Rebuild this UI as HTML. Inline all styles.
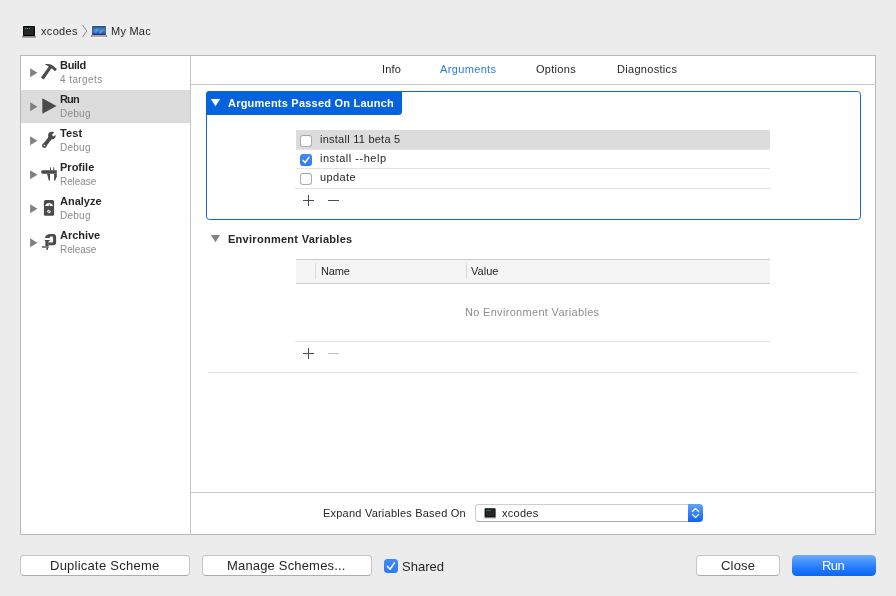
<!DOCTYPE html>
<html>
<head>
<meta charset="utf-8">
<title>Scheme Editor</title>
<style>
html,body{margin:0;padding:0;}
body{width:896px;height:596px;background:#ececec;position:relative;overflow:hidden;
 font-family:"Liberation Sans",sans-serif;font-size:11px;color:#262626;}
.abs{position:absolute;}
.t{position:absolute;white-space:nowrap;line-height:16px;will-change:transform;}
#panel{left:20px;top:55px;width:854px;height:478px;background:#fff;border:1px solid #b9b9b9;}
#sdiv{left:190px;top:56px;width:1px;height:478px;background:#c4c4c4;}
.sel{position:absolute;left:21px;top:90px;width:169px;height:33px;background:#dcdcdc;}
.tri{position:absolute;left:30px;width:0;height:0;border-left:7.3px solid #808080;border-top:4.5px solid transparent;border-bottom:4.5px solid transparent;}
.ico{position:absolute;left:40px;}
.hline{position:absolute;height:1px;background:#e2e2e2;}
.cb{position:absolute;width:10px;height:10px;border:1px solid #adadad;border-top-color:#a4a4a4;border-radius:3px;background:#fff;}
.cbon{position:absolute;width:12px;height:12px;border-radius:3px;background:linear-gradient(#4089f8,#2e7af6);}
.btn{position:absolute;height:19px;border:1px solid #c6c6c6;border-bottom-color:#adadad;border-radius:4px;background:#fff;}
</style>
</head>
<body>
<svg class="abs" style="left:21px;top:24px" width="17" height="15" viewBox="0 0 17 15">
 <rect x="1" y="1" width="14" height="12.8" rx="1" fill="#e6f7fb" opacity="0.8"/>
 <rect x="1.1" y="11.9" width="13.8" height="1.8" fill="#8a8a8a"/>
 <rect x="2" y="1.9" width="12" height="10" rx="0.6" fill="#050505"/>
 <rect x="3" y="2.9" width="10" height="8" fill="#262626"/>
 <circle cx="4.6" cy="4.5" r="0.62" fill="#35c64a"/><circle cx="6.5" cy="4.5" r="0.62" fill="#35c64a"/><circle cx="8.4" cy="4.5" r="0.62" fill="#35c64a"/>
</svg>
<div class="t" style="left:41.25px;top:23.19px;font-size:11px;letter-spacing:0.331px;">xcodes</div>
<svg class="abs" style="left:81px;top:24px" width="8" height="14" viewBox="0 0 8 14">
 <path d="M1.4 0.8 L5.8 7 L1.4 13.2" fill="none" stroke="#7d7d7d" stroke-width="0.9"/>
</svg>
<svg class="abs" style="left:90px;top:24px" width="19" height="15" viewBox="0 0 19 15">
 <defs><linearGradient id="scr" x1="0" y1="0" x2="0" y2="1"><stop offset="0" stop-color="#2a5fb4"/><stop offset="0.45" stop-color="#3f86cc"/><stop offset="0.8" stop-color="#2a5fc0"/><stop offset="1" stop-color="#1b2c9c"/></linearGradient></defs>
 <rect x="1.4" y="1.2" width="15.2" height="12.6" rx="1" fill="#fbfbfb" opacity="0.85"/>
 <rect x="2.1" y="1.9" width="13.7" height="9.3" rx="0.5" fill="#3b3b3b"/>
 <rect x="2.7" y="2.6" width="12.5" height="8.2" fill="url(#scr)"/>
 <path d="M4.3 8.6 C4.8 5.6 6.2 4.6 8.6 4.6 L6.2 9 Z M8.6 9.6 C10 6.4 11.8 5.4 13.6 5.2 L11.4 9.2 Z" fill="#6cb6da" opacity="0.6"/>
 <path d="M1 11 H17 V12.7 Q17 13 16.6 13 H1.4 Q1 13 1 12.7 Z" fill="#a9a9a3"/>
 <rect x="1" y="11.6" width="1" height="1.4" fill="#777"/><rect x="16" y="11.6" width="1" height="1.4" fill="#777"/>
</svg>
<div class="t" style="left:111.35px;top:23.19px;font-size:11px;letter-spacing:0.240px;">My Mac</div>
<div id="panel" class="abs"></div>
<div id="sdiv" class="abs"></div>
<div class="sel"></div>
<svg class="abs" style="left:30px;top:68px" width="8" height="10" viewBox="0 0 8 10"><path d="M0.1 0.3 L7.4 4.75 L0.1 9.2 Z" fill="#808080"/></svg>
<svg class="ico" style="top:63px" width="18" height="18" viewBox="0 0 18 18"><g transform="translate(0,0.5)"><path d="M5.2 0.8 C7 0.3 9.5 0.3 11 1 C12.5 1.8 13.5 2.8 14.5 3.6 L16.9 5.6 L15.4 7.5 L14.2 7.2 C13.4 6.2 12.6 5.5 11.3 5.1 L3.73 16.11 L0.87 14.09 L8.77 3.33 C8.4 2.4 7.2 1.8 5.2 1.5 Z" fill="#4b4b4b"/></g></svg>
<div class="t" style="left:60.35px;top:56.89px;font-size:11px;letter-spacing:-0.300px;font-weight:bold;">Build</div>
<div class="t" style="left:60.35px;top:71.53px;font-size:10px;letter-spacing:0.422px;color:#8b8b8b;">4 targets</div>
<svg class="abs" style="left:30px;top:102px" width="8" height="10" viewBox="0 0 8 10"><path d="M0.1 0.3 L7.4 4.75 L0.1 9.2 Z" fill="#808080"/></svg>
<svg class="ico" style="top:97px" width="18" height="18" viewBox="0 0 18 18"><g transform="translate(0,0.5)"><path d="M2.3 0.8 L16.6 8.5 L2.3 16.2 Z" fill="#4b4b4b"/></g></svg>
<div class="t" style="left:60.35px;top:90.89px;font-size:11px;letter-spacing:-0.848px;font-weight:bold;">Run</div>
<div class="t" style="left:60.35px;top:105.53px;font-size:10px;letter-spacing:0.256px;color:#8b8b8b;">Debug</div>
<svg class="abs" style="left:30px;top:136px" width="8" height="10" viewBox="0 0 8 10"><path d="M0.1 0.3 L7.4 4.75 L0.1 9.2 Z" fill="#808080"/></svg>
<svg class="ico" style="top:131px" width="18" height="18" viewBox="0 0 18 18"><g transform="translate(0,0.5)"><path d="M4.5 13.9 L11 5.4" stroke="#4b4b4b" stroke-width="3.9" stroke-linecap="round"/><circle cx="4.4" cy="14.05" r="2.35" fill="#4b4b4b"/><circle cx="11.9" cy="4" r="3.8" fill="#4b4b4b"/><path d="M13.7 3.3 L17.6 -0.6" stroke="#fff" stroke-width="2.9" stroke-linecap="round"/><circle cx="4.35" cy="14.1" r="0.75" fill="#fff"/></g></svg>
<div class="t" style="left:60.35px;top:124.89px;font-size:11px;letter-spacing:0.098px;font-weight:bold;">Test</div>
<div class="t" style="left:60.35px;top:139.53px;font-size:10px;letter-spacing:0.256px;color:#8b8b8b;">Debug</div>
<svg class="abs" style="left:30px;top:170px" width="8" height="10" viewBox="0 0 8 10"><path d="M0.1 0.3 L7.4 4.75 L0.1 9.2 Z" fill="#808080"/></svg>
<svg class="ico" style="top:165px" width="18" height="18" viewBox="0 0 18 18"><g transform="translate(0,0.5)"><path d="M2.8 4.8 H16.8 V8.3 H2.8 A1.75 1.75 0 0 1 2.8 4.8 Z" fill="#4b4b4b"/><path d="M9.9 5 L10.2 1.4 H10.7 L11.3 5 Z M13 5 L13.6 1.4 H14.1 L14.4 5 Z" fill="#4b4b4b"/><path d="M7 8.2 H10 V15 L9.3 15.3 L8.7 14.5 Z" fill="#4b4b4b"/><path d="M14.1 8.2 H16.8 V11 L15.2 15 L14.6 15.3 L14.1 15 Z" fill="#4b4b4b"/></g></svg>
<div class="t" style="left:60.35px;top:158.89px;font-size:11px;letter-spacing:0.010px;font-weight:bold;">Profile</div>
<div class="t" style="left:60.35px;top:173.53px;font-size:10px;letter-spacing:-0.083px;color:#8b8b8b;">Release</div>
<svg class="abs" style="left:30px;top:204px" width="8" height="10" viewBox="0 0 8 10"><path d="M0.1 0.3 L7.4 4.75 L0.1 9.2 Z" fill="#808080"/></svg>
<svg class="ico" style="top:199px" width="18" height="18" viewBox="0 0 18 18"><g transform="translate(0,0.5)"><rect x="3.9" y="0.4" width="10.2" height="15.85" rx="1.6" fill="#4b4b4b"/><path d="M5.2 6.5 A4 4 0 0 1 13 6.5 Z" fill="#fff"/><path d="M8.8 6.9 L9.9 4.4" stroke="#4b4b4b" stroke-width="0.8"/><circle cx="8.9" cy="12" r="1.8" fill="#fff"/><path d="M7.2 13.4 L10.6 10.6" stroke="#4b4b4b" stroke-width="0.9"/></g></svg>
<div class="t" style="left:60.35px;top:192.89px;font-size:11px;letter-spacing:-0.013px;font-weight:bold;">Analyze</div>
<div class="t" style="left:60.35px;top:207.53px;font-size:10px;letter-spacing:0.256px;color:#8b8b8b;">Debug</div>
<svg class="abs" style="left:30px;top:238px" width="8" height="10" viewBox="0 0 8 10"><path d="M0.1 0.3 L7.4 4.75 L0.1 9.2 Z" fill="#808080"/></svg>
<svg class="ico" style="top:233px" width="18" height="18" viewBox="0 0 18 18"><g transform="translate(0,0.5)"><path d="M4.8 4.4 C5.6 2.2 7.6 0.6 10 0.6 H13.2 Q16.1 0.6 16.1 3.5 V9 Q16.1 11.8 13.2 11.8 H8.6 V9.1 H12 Q13.1 9.1 13.1 8 V4.2 Q13.1 3.1 12 3.1 H10.6 Q9.8 3.1 9.8 4.4 Z" fill="#4b4b4b"/><rect x="4.8" y="6.5" width="5" height="1" fill="#4b4b4b"/><rect x="5.4" y="7.4" width="3.3" height="5.2" fill="#4b4b4b"/><rect x="6.3" y="12.4" width="1.7" height="3.9" fill="#4b4b4b"/><rect x="1.9" y="12.6" width="6.8" height="1.8" fill="#777"/></g></svg>
<div class="t" style="left:60.35px;top:226.89px;font-size:11px;letter-spacing:-0.040px;font-weight:bold;">Archive</div>
<div class="t" style="left:60.35px;top:241.53px;font-size:10px;letter-spacing:-0.083px;color:#8b8b8b;">Release</div>
<div class="abs" style="left:191px;top:84px;width:685px;height:1px;background:#c8c8c8;"></div>
<div class="t" style="left:382.35px;top:61.29px;font-size:11px;letter-spacing:0.136px;">Info</div>
<div class="t" style="left:440.15px;top:61.29px;font-size:11px;letter-spacing:0.352px;color:#2b7be2;">Arguments</div>
<div class="t" style="left:536.35px;top:61.29px;font-size:11px;letter-spacing:0.296px;">Options</div>
<div class="t" style="left:616.65px;top:61.29px;font-size:11px;letter-spacing:0.303px;">Diagnostics</div>
<div class="abs" style="left:206px;top:91px;width:653px;height:127px;border:1px solid #1166e2;border-radius:3.5px;"></div>
<div class="abs" style="left:206px;top:91px;width:195.5px;height:24px;background:#0762de;border-radius:3.5px 0 3.5px 0;"></div>
<svg class="abs" style="left:210px;top:99px" width="11" height="8" viewBox="0 0 11 8"><path d="M0.8 0.1 H10.2 L5.5 7.2 Z" fill="#fff"/></svg>
<div class="t" style="left:227.55px;top:95.49px;font-size:11px;letter-spacing:0.222px;font-weight:bold;color:#fff;">Arguments Passed On Launch</div>
<div class="abs" style="left:296px;top:130px;width:474px;height:19px;background:#dcdcdc;"></div>
<div class="hline" style="left:296px;top:149px;width:474px;background:#e6e6e6"></div>
<div class="hline" style="left:296px;top:168px;width:474px;"></div>
<div class="hline" style="left:295px;top:188px;width:476px;"></div>
<div class="cb" style="left:300px;top:135px;"></div>
<div class="cbon" style="left:300px;top:154px;"><svg width="12" height="12" viewBox="0 0 12 12" style="position:absolute;left:0;top:0"><path d="M3 6.3 L5.1 8.7 L9 3.3" stroke="#fff" stroke-width="1.5" fill="none" stroke-linecap="round" stroke-linejoin="round"/></svg></div>
<div class="cb" style="left:300px;top:173px;"></div>
<div class="t" style="left:319.55px;top:131.29px;font-size:11px;letter-spacing:0.248px;">install 11 beta 5</div>
<div class="t" style="left:319.55px;top:150.29px;font-size:11px;letter-spacing:0.522px;">install --help</div>
<div class="t" style="left:319.55px;top:169.19px;font-size:11px;letter-spacing:0.394px;">update</div>
<svg class="abs" style="left:302px;top:194px" width="13" height="13" viewBox="0 0 13 13"><path d="M1 6.5 H12 M6.5 1 V12" stroke="#4d4d4d" stroke-width="1"/></svg>
<svg class="abs" style="left:327px;top:194px" width="13" height="13" viewBox="0 0 13 13"><path d="M1 6.5 H12" stroke="#4d4d4d" stroke-width="1"/></svg>
<svg class="abs" style="left:210px;top:234px" width="11" height="9" viewBox="0 0 11 9"><path d="M0.9 1 H10 L5.45 8.2 Z" fill="#828282"/></svg>
<div class="t" style="left:227.55px;top:231.49px;font-size:11px;letter-spacing:0.280px;font-weight:bold;">Environment Variables</div>
<div class="abs" style="left:296px;top:259px;width:474px;height:23px;background:#f5f5f5;border-top:1px solid #cbcbcb;border-bottom:1px solid #cbcbcb;"></div>
<div class="abs" style="left:315px;top:263px;width:1px;height:16px;background:#d9d9d9;"></div>
<div class="abs" style="left:466px;top:263px;width:1px;height:16px;background:#d9d9d9;"></div>
<div class="t" style="left:320.55px;top:263.29px;font-size:11px;letter-spacing:-0.181px;">Name</div>
<div class="t" style="left:471.45px;top:263.29px;font-size:11px;letter-spacing:0.023px;">Value</div>
<div class="t" style="left:465.15px;top:304.09px;font-size:11px;letter-spacing:0.310px;color:#8d8d8d;">No Environment Variables</div>
<div class="hline" style="left:295px;top:341px;width:476px;"></div>
<svg class="abs" style="left:302px;top:347px" width="13" height="13" viewBox="0 0 13 13"><path d="M1 6.5 H12 M6.5 1 V12" stroke="#4d4d4d" stroke-width="1"/></svg>
<svg class="abs" style="left:327px;top:347px" width="13" height="13" viewBox="0 0 13 13"><path d="M1 6.5 H12" stroke="#c0c0c0" stroke-width="1"/></svg>
<div class="hline" style="left:208px;top:372px;width:650px;"></div>
<div class="abs" style="left:191px;top:492px;width:685px;height:1px;background:#c8c8c8;"></div>
<div class="t" style="left:323.45px;top:505.49px;font-size:11px;letter-spacing:0.221px;">Expand Variables Based On</div>
<div class="abs" style="left:475px;top:504px;width:226px;height:16px;border:1px solid #cdcdcd;border-bottom-color:#ababab;border-radius:4px;background:#fff;"></div>
<div class="abs" style="left:688px;top:504px;width:15px;height:18px;border-radius:0 4px 4px 0;background:linear-gradient(#5ea2f9,#0d63fa);"></div>
<svg class="abs" style="left:688px;top:504px" width="15" height="18" viewBox="0 0 15 18"><path d="M4.4 7.5 L7.5 4.4 L10.6 7.5 M4.4 10.4 L7.5 13.5 L10.6 10.4" stroke="#fff" stroke-width="1.25" fill="none" stroke-linecap="round" stroke-linejoin="round"/></svg>
<svg class="abs" style="left:483px;top:508px" width="14" height="11" viewBox="0 0 14 11"><g transform="translate(0.5,0)"><rect x="1.1" y="0.3" width="11" height="9" rx="0.8" fill="#0a0a0a"/><rect x="2" y="1.2" width="9.2" height="7.2" fill="#262626"/><rect x="0.9" y="9" width="11.4" height="1.3" fill="#808080"/><rect x="2.8" y="2.1" width="4.6" height="0.8" fill="#2f9a3a"/></g></svg>
<div class="t" style="left:501.65px;top:505.19px;font-size:11px;letter-spacing:0.272px;">xcodes</div>
<div class="btn" style="left:20px;top:555px;width:168px;"></div>
<div class="t" style="left:50.15px;top:557.50px;font-size:13px;letter-spacing:0.247px;">Duplicate Scheme</div>
<div class="btn" style="left:202px;top:555px;width:168px;"></div>
<div class="t" style="left:227.35px;top:557.50px;font-size:13px;letter-spacing:0.173px;">Manage Schemes...</div>
<div class="cbon" style="left:384px;top:559px;width:14px;height:14px;border-radius:3.5px;"><svg width="14" height="14" viewBox="0 0 14 14" style="position:absolute;left:0;top:0"><path d="M3.5 7.4 L6 10.2 L10.5 3.9" stroke="#fff" stroke-width="1.55" fill="none" stroke-linecap="round" stroke-linejoin="round"/></svg></div>
<div class="t" style="left:402.35px;top:558.50px;font-size:13px;letter-spacing:0.035px;">Shared</div>
<div class="btn" style="left:696px;top:555px;width:82px;"></div>
<div class="t" style="left:720.85px;top:557.50px;font-size:13px;letter-spacing:0.188px;">Close</div>
<div class="abs" style="left:792px;top:555px;width:84px;height:21px;border-radius:4.5px;background:linear-gradient(#6aabfc,#2a7ffc 55%,#0765fb);"></div>
<div class="t" style="left:822.35px;top:557.50px;font-size:13px;letter-spacing:-0.578px;color:#fff;">Run</div>
</body>
</html>
